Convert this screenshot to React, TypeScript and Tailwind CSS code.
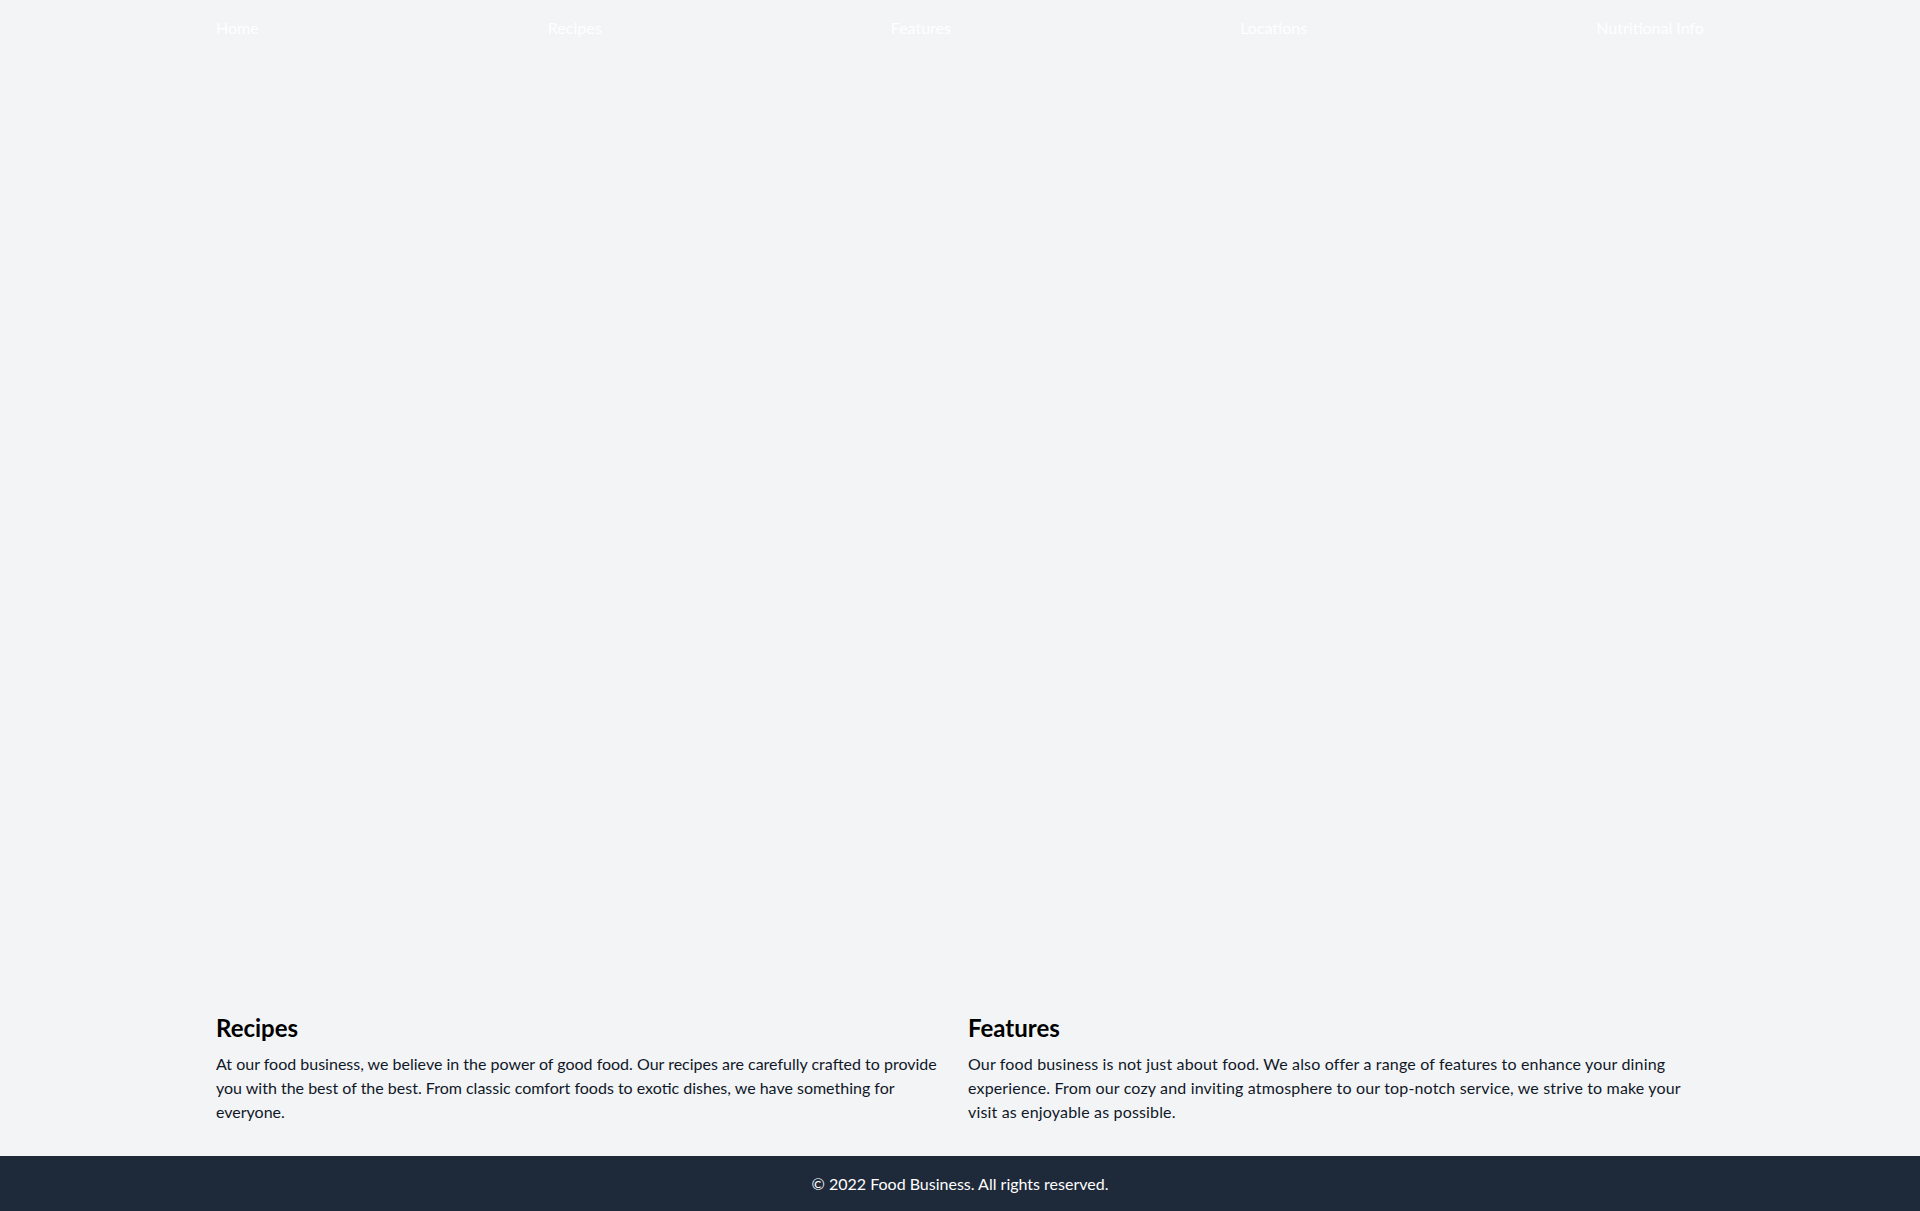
export default function App() {
  const links = ['Home', 'Recipes', 'Features', 'Locations', 'Nutritional Info']

  return (
    <div
      className="min-h-screen flex flex-col bg-gray-100"
      style={{ fontFamily: '"Segoe UI", Lato, "Noto Sans", sans-serif' }}
    >
      {/* Top navigation (sits over the hero, which has no image here) */}
      <nav className="container mx-auto px-6 py-4">
        <ul className="flex justify-between text-white">
          {links.map((link) => (
            <li key={link}>
              <a href="#">{link}</a>
            </li>
          ))}
        </ul>
      </nav>

      {/* Hero */}
      <div className="h-[924px]" />

      {/* Info sections */}
      <section className="container mx-auto px-6 py-8">
        <div className="grid grid-cols-2 gap-4">
          <div>
            <h2 className="text-2xl font-bold mb-2 text-black">Recipes</h2>
            <p className="text-gray-900">
              At our food business, we believe in the power of good food. Our recipes are carefully crafted to provide you with the best of the best. From classic comfort foods to exotic dishes, we have something for everyone.
            </p>
          </div>
          <div>
            <h2 className="text-2xl font-bold mb-2 text-black">Features</h2>
            <p className="text-gray-900 tracking-[0.01em]">
              Our food business is not just about food. We also offer a range of features to enhance your dining experience. From our cozy and inviting atmosphere to our top-notch service, we strive to make your visit as enjoyable as possible.
            </p>
          </div>
        </div>
      </section>

      {/* Footer */}
      <footer className="bg-gray-800 text-white py-4 text-center">
        <p>© 2022 Food Business. All rights reserved.</p>
      </footer>
    </div>
  )
}
